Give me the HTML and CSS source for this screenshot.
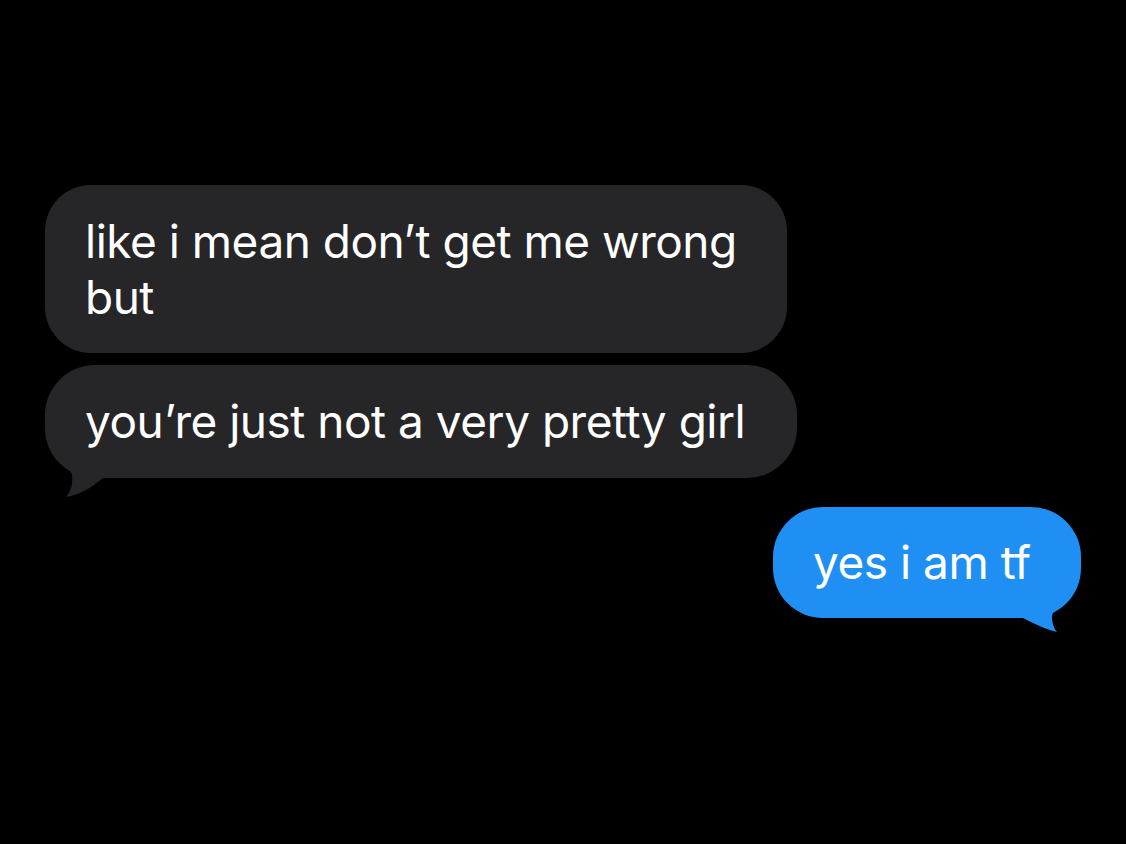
FILE: index.html
```html
<!DOCTYPE html>
<html>
<head>
<meta charset="utf-8">
<link rel="stylesheet" href="styles.css">
</head>
<body>
<div class="chat">
  <div class="bubble in first">like i mean don’t get me wrong<br>but</div>
  <div class="bubble in last">you’re just not a very pretty girl
    <svg class="tail tail-in" width="70" height="55" viewBox="0 -30 70 55"><path d="M18 -18 L27 -4 C28 6 26 13 21 19 C34 17 46 10 58 0 L58 -18 Z" fill="#262528"/></svg>
  </div>
  <div class="bubble out">yes i am tf
    <svg class="tail tail-out" width="70" height="55" viewBox="-70 -30 70 55"><path d="M-16 -22 C-22 -12 -30 -8 -29 2 C-28 8 -26 12 -24 14 C-34 12 -46 6 -58 0 L-58 -22 Z" fill="#1f8ff4"/></svg>
  </div>
</div>
</body>
</html>
```

FILE: styles.css
```css
html, body {
  margin: 0;
  padding: 0;
  background: #000;
}
body {
  width: 1126px;
  height: 844px;
  overflow: hidden;
}
.chat {
  display: flex;
  flex-direction: column;
  padding: 185px 45px 0 45px;
  font-family: "Inter", "Liberation Sans", sans-serif;
  font-size: 46px;
  line-height: 56px;
  color: #fff;
  letter-spacing: -0.5px;
}
.bubble {
  position: relative;
  box-sizing: border-box;
  border-radius: 46px;
}
.in {
  align-self: flex-start;
  background: #262528;
  padding: 0 48px 0 40px;
}
.first {
  width: 742px;
  height: 168px;
  padding-top: 28px;
}
.last {
  width: 752px;
  height: 113px;
  margin-top: 12px;
  padding-top: 28px;
  border-radius: 50px;
}
.out {
  align-self: flex-end;
  background: #1f8ff4;
  margin-top: 29px;
  width: 308px;
  height: 111px;
  padding: 27px 0 0 40px;
  border-radius: 50px;
}
.tail {
  position: absolute;
  bottom: -25px;
}
.tail-in {
  left: 0;
}
.tail-out {
  right: 0;
}
```
